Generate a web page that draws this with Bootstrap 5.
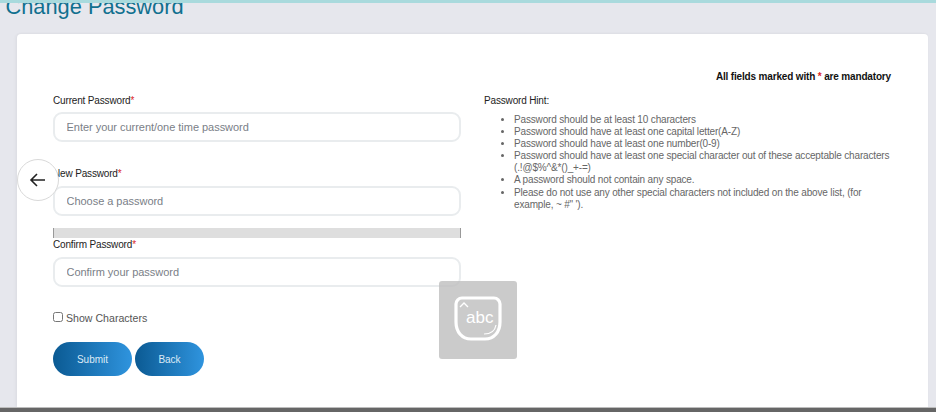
<!DOCTYPE html>
<html lang="en">
<head>
    <meta charset="UTF-8">
    <meta name="viewport" content="width=device-width, initial-scale=1.0">
    <title>Change Password</title>
    <link href="https://cdn.jsdelivr.net/npm/bootstrap@5.3.2/dist/css/bootstrap.min.css" rel="stylesheet">
    <style>
        html, body { height: 412px; overflow: hidden; }
        body { background: #e6e7ed; font-family: "Liberation Sans", Arial, sans-serif; font-size: 10px; letter-spacing: -.16px; color: #212529; position: relative; }
        .top-strip { position: absolute; top: 0; left: 0; right: 0; height: 3px; background: #a9dadd; z-index: 3; }
        .bottom-strip { height: 5px; background: #666; border-top: 1px solid #bdbdbd; }
        .page-title { font-family: "Liberation Sans", Arial, sans-serif; font-size: 21.8px; letter-spacing: 0; line-height: 26px; color: #11708f; margin: -6px 0 0 5.5px; height: 40px; font-weight: 400; }
        .main-panel { height: 373px; margin: 0 8px 0 17px; background: #fff; border-radius: 4px 4px 0 0; box-shadow: -2px 0 3px rgba(0,0,0,.03), 0 -1px 2px rgba(0,0,0,.03); padding: 36px 37px 0 36px; }
        .mandatory-note { font-weight: 700; font-size: 10px; line-height: 13px; color: #111; text-align: right; margin-bottom: 11px; }
        .req { color: #dc2626; }
        .form-side { width: 408px; }
        .hint-side { margin-left: 23px; flex: 1; }
        .field-label { display: block; line-height: 13px; color: #222; margin-bottom: 5px; }
        .label-new { margin-top: 25px; margin-bottom: 6px; }
        .label-confirm { margin-bottom: 6px; }
        .field-input.form-control { height: 30px; border: 2px solid #e9ecee; border-radius: 9px; padding: 0 12px 0 11.5px; font-size: 11px; letter-spacing: -.03px; box-shadow: none; }
        .field-input.form-control::placeholder { color: #7a8087; opacity: 1; }
        .strength-bar { height: 10px; background: #dedede; border: 1px solid #999; border-width: 0 1px; margin-top: 12px; }
        .hint-title { line-height: 13px; color: #222; margin-bottom: 7px; }
        .hint-list { padding-left: 30px; margin: 0; color: #666; line-height: 12.1px; }
        .show-row { color: #555; font-size: 10.6px; letter-spacing: 0; line-height: 14px; margin-top: 24px; }
        .show-row input { width: 10px; height: 10px; margin: 0 3px 0 0; vertical-align: 0; }
        .btn-row { gap: 3px; margin-top: 17px; }
        .grad-btn.btn { width: 79px; height: 34px; padding: 0; border: 0; border-radius: 17px; color: #dceaf6; font-size: 10px; background: linear-gradient(90deg, #0b5a93, #2f94de); }
        .grad-btn.btn-back { width: 69px; }
        .back-circle { position: absolute; left: 17px; top: 159px; width: 42px; height: 42px; border-radius: 50%; background: #fff; border: 1px solid #d9d9d9; z-index: 2; }
        .ime-badge { position: absolute; left: 439px; top: 281px; width: 78px; height: 78px; padding-bottom: 3px; border-radius: 3px; background: rgba(190,190,190,.8); z-index: 2; }
    </style>
</head>
<body>
    <div class="top-strip"></div>
    <h1 class="page-title">Change Password</h1>
    <div class="main-panel">
        <div class="mandatory-note">All fields marked with <span class="req">*</span> are mandatory</div>
        <div class="d-flex">
            <form class="form-side">
                <label class="field-label">Current Password<span class="req">*</span></label>
                <input type="text" class="form-control field-input" placeholder="Enter your current/one time password">
                <label class="field-label label-new">New Password<span class="req">*</span></label>
                <input type="text" class="form-control field-input" placeholder="Choose a password">
                <div class="strength-bar"></div>
                <label class="field-label label-confirm">Confirm Password<span class="req">*</span></label>
                <input type="text" class="form-control field-input" placeholder="Confirm your password">
                <div class="show-row"><input type="checkbox">Show Characters</div>
                <div class="d-flex btn-row">
                    <button type="button" class="btn grad-btn">Submit</button>
                    <button type="button" class="btn grad-btn btn-back">Back</button>
                </div>
            </form>
            <div class="hint-side">
                <div class="hint-title">Password Hint:</div>
                <ul class="hint-list">
                    <li>Password should be at least 10 characters</li>
                    <li>Password should have at least one capital letter(A-Z)</li>
                    <li>Password should have at least one number(0-9)</li>
                    <li>Password should have at least one special character out of these acceptable characters (.!@$%^&amp;*()_+-=)</li>
                    <li>A password should not contain any space.</li>
                    <li>Please do not use any other special characters not included on the above list, (for example, ~ #" ').</li>
                </ul>
            </div>
        </div>
    </div>
    <div class="bottom-strip"></div>

    <div class="back-circle d-flex align-items-center justify-content-center">
        <svg width="18" height="16" viewBox="0 0 18 16" fill="none" stroke="#222" stroke-width="1.6"><path d="M16 8H2M8 2 2 8l6 6"/></svg>
    </div>
    <div class="ime-badge d-flex align-items-center justify-content-center">
        <svg width="48" height="46" viewBox="0 0 48 46" fill="none" stroke="#fff">
            <path d="M8 2h32a6 6 0 0 1 6 6v18c0 10-6 17-15 17H17C8 43 2 36 2 26V8a6 6 0 0 1 6-6z" stroke-width="3.2"/>
            <path d="M6 11l4-4 4 4" stroke-width="1.4"/>
            <path d="M42 29c-1 6-5 9-12 9" stroke-width="1.2"/>
            <text x="12" y="27" font-family="Liberation Sans, sans-serif" font-size="17" letter-spacing="0" fill="#fff" stroke="none">abc</text>
        </svg>
    </div>

    <script src="https://cdn.jsdelivr.net/npm/bootstrap@5.3.2/dist/js/bootstrap.bundle.min.js"></script>
</body>
</html>
